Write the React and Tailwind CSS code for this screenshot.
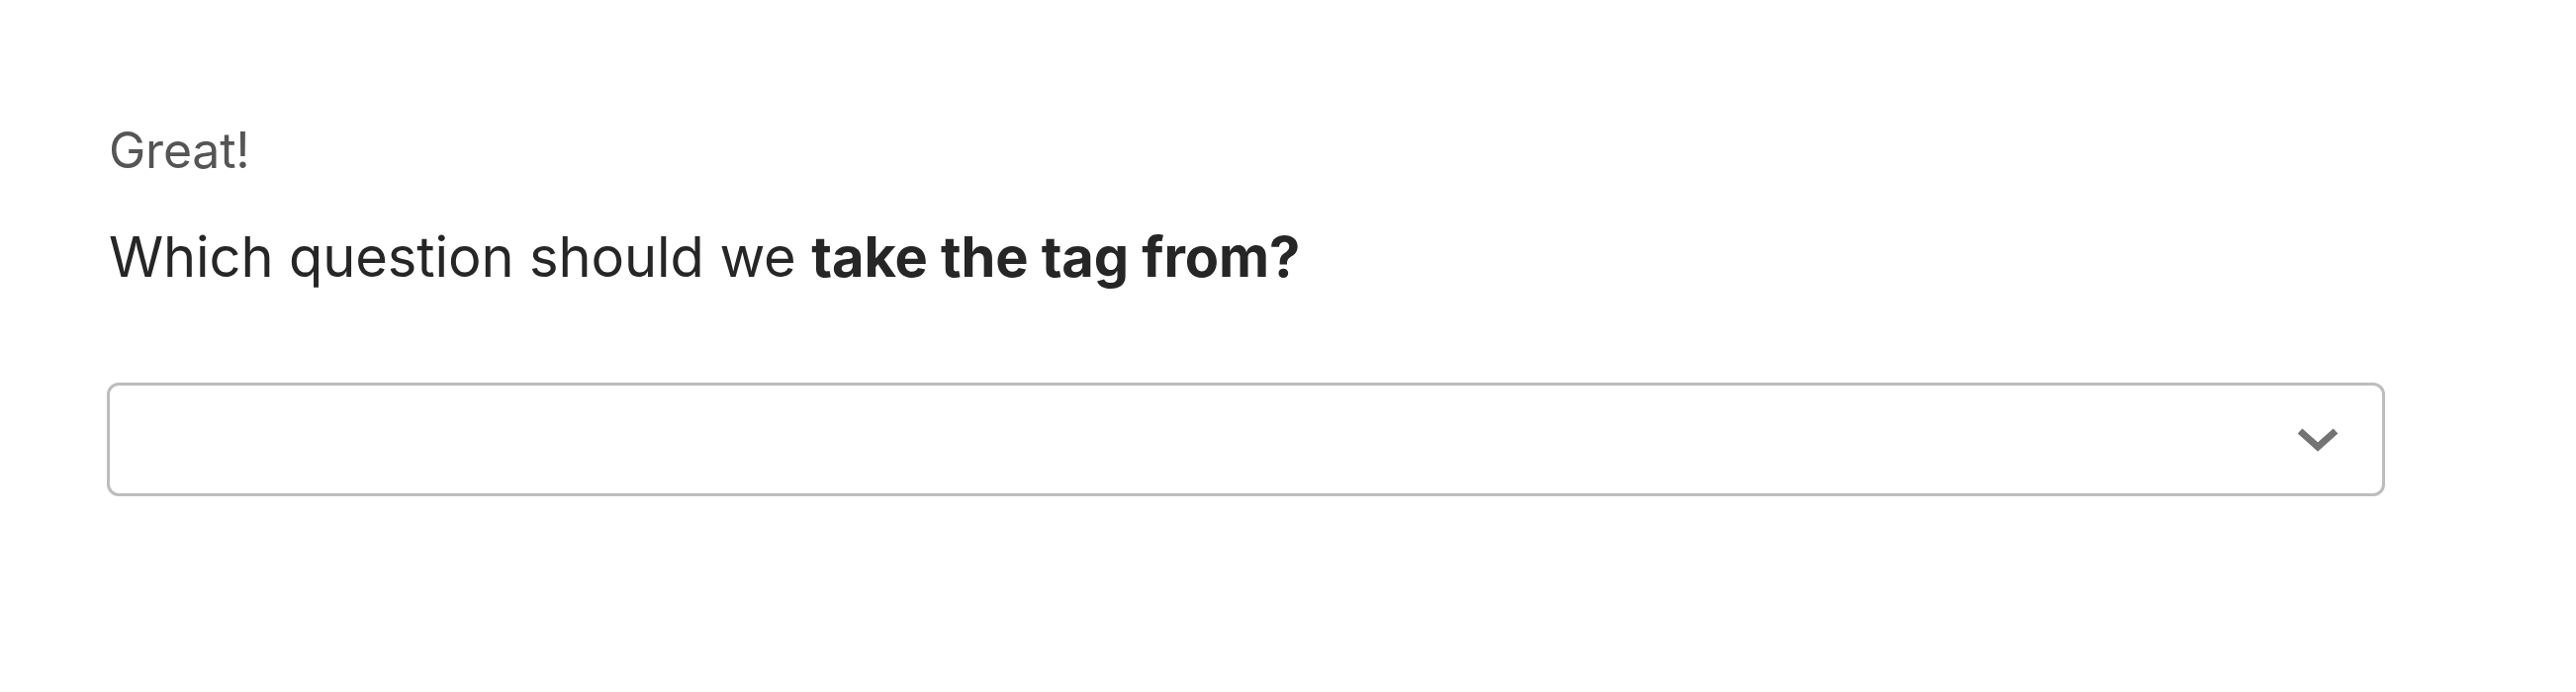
import React from 'react';

const Chevron = () => (
  <svg width="46" height="28" viewBox="0 0 46 28" fill="none" className="shrink-0">
    <path d="M5 5 L23 21 L41 5" stroke="#737373" strokeWidth="7" strokeLinecap="butt" strokeLinejoin="miter" />
  </svg>
);

const App = () => {
  return (
    <div className="w-[2604px] h-[700px] bg-white pl-[108px] pt-[122px]" style={{ fontFamily: 'Inter, Roboto, "Liberation Sans", sans-serif' }}>
      <p className="pl-[2px] text-[50px] leading-[60px] text-[#555555] tracking-[-0.2px]">Great!</p>
      <p className="pl-[2px] mt-[44px] text-[56px] leading-[68px] text-[#262626] tracking-[-0.1px]">
        Which question should we <span className="font-bold">take the tag from?</span>
      </p>
      <div className="mt-[93px] w-[2303px] h-[115px] border-[3px] border-[#bdbdbd] rounded-[12px] flex items-center justify-end pr-[42px]">
        <Chevron />
      </div>
    </div>
  );
};

export default App;
